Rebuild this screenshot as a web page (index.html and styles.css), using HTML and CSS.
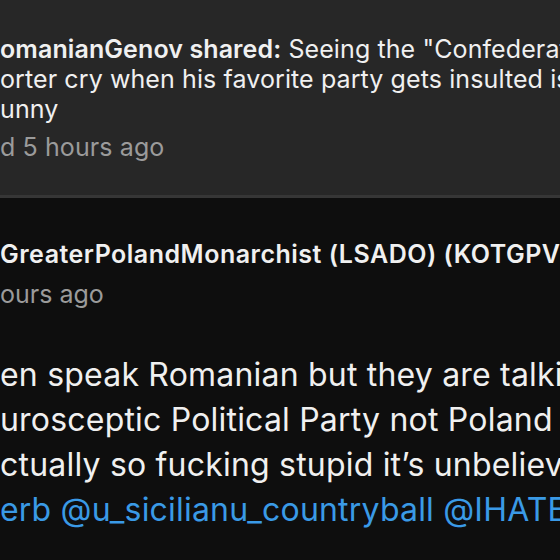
FILE: index.html
```html
<!DOCTYPE html>
<html>
<head>
<meta charset="utf-8">
<link rel="stylesheet" href="styles.css">
</head>
<body>
<div class="page">
  <section class="shared">
    <div class="shared-text">
      <div class="line"><span class="who">omanianGenov shared:</span> Seeing the "Confederation</div>
      <div class="line">orter cry when his favorite party gets insulted is</div>
      <div class="line">unny</div>
    </div>
    <div class="shared-meta">d 5 hours ago</div>
  </section>
  <div class="divider"></div>
  <section class="comment">
    <div class="author">GreaterPolandMonarchist (LSADO) (KOTGPV)</div>
    <div class="time">ours ago</div>
    <div class="body">
      <div class="line">en speak Romanian but they are talking</div>
      <div class="line">urosceptic Political Party not Poland</div>
      <div class="line">ctually so fucking stupid it’s unbelievable</div>
      <div class="line mentions">erb @u_sicilianu_countryball @IHATEB</div>
    </div>
  </section>
</div>
</body>
</html>
```

FILE: styles.css
```css
html, body {
  margin: 0;
  padding: 0;
  background: #0e0e0e;
}
body {
  width: 560px;
  height: 560px;
  overflow: hidden;
  font-family: Inter, "Noto Sans", sans-serif;
  -webkit-font-smoothing: antialiased;
}
.page {
  display: flex;
  flex-direction: column;
}
.line {
  white-space: nowrap;
  overflow: hidden;
}
.shared {
  background: #272727;
  height: 195px;
  padding: 34px 0 0 0;
  box-sizing: border-box;
  color: #f0f0f0;
  overflow: hidden;
}
.shared-text {
  font-size: 25px;
  line-height: 30px;
  letter-spacing: 0.1px;
}
.who {
  font-weight: 600;
}
.shared-meta {
  margin-top: 8px;
  font-size: 25px;
  line-height: 30px;
  letter-spacing: 0.1px;
  color: #9b9b9b;
}
.divider {
  height: 3px;
  background: #363636;
}
.comment {
  padding-top: 41px;
  color: #f0f0f0;
  overflow: hidden;
}
.author {
  font-size: 25px;
  font-weight: 600;
  line-height: 30px;
  letter-spacing: 0.5px;
  white-space: nowrap;
  overflow: hidden;
}
.time {
  margin-top: 10px;
  font-size: 25px;
  line-height: 30px;
  color: #9b9b9b;
}
.body {
  margin-top: 43px;
  font-size: 32px;
  line-height: 45px;
  letter-spacing: 0.2px;
}
.mentions {
  color: #3a9ae6;
}
```
